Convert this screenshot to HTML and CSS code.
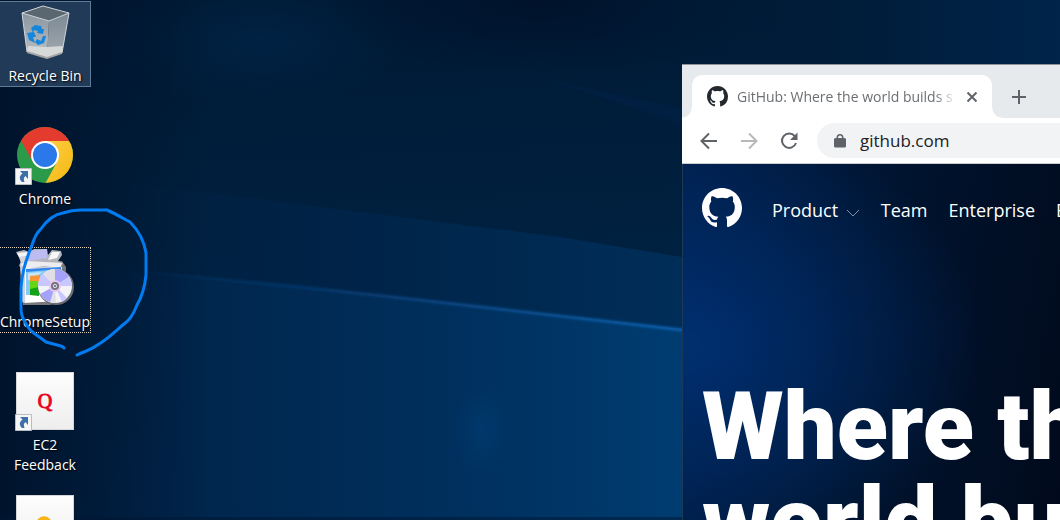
FILE: index.html
```html
<!DOCTYPE html>
<html lang="en">
<head>
<meta charset="utf-8">
<title>Desktop</title>
<link rel="stylesheet" href="styles.css">
</head>
<body>
<main class="desktop">
  <svg class="wallpaper" viewBox="0 0 1060 520" preserveAspectRatio="xMinYMin slice" aria-hidden="true">
    <defs>
      <linearGradient id="base" x1="0" y1="0" x2="0.1" y2="1">
        <stop offset="0" stop-color="#001832"/><stop offset="0.3" stop-color="#001e3b"/><stop offset="1" stop-color="#00254a"/>
      </linearGradient>
      <linearGradient id="lower" gradientUnits="userSpaceOnUse" x1="60" y1="0" x2="690" y2="0">
        <stop offset="0" stop-color="#002148" stop-opacity="0"/><stop offset="0.25" stop-color="#00274e"/><stop offset="0.65" stop-color="#00305e"/><stop offset="1" stop-color="#003d72"/>
      </linearGradient>
      <linearGradient id="middle" gradientUnits="userSpaceOnUse" x1="100" y1="0" x2="690" y2="0">
        <stop offset="0" stop-color="#002244" stop-opacity="0"/><stop offset="0.4" stop-color="#002347"/><stop offset="1" stop-color="#002e59"/>
      </linearGradient>
      <linearGradient id="beam" gradientUnits="userSpaceOnUse" x1="130" y1="0" x2="690" y2="0">
        <stop offset="0" stop-color="#0a4a8c" stop-opacity="0"/><stop offset="0.4" stop-color="#0b4380" stop-opacity="0.7"/><stop offset="1" stop-color="#0864b4"/>
      </linearGradient>
      <linearGradient id="edge" x1="0" y1="0" x2="1" y2="0">
        <stop offset="0" stop-color="#00132c"/><stop offset="1" stop-color="#00132c" stop-opacity="0"/>
      </linearGradient>
      <radialGradient id="glow"><stop offset="0" stop-color="#002549" stop-opacity="0.7"/><stop offset="1" stop-color="#002549" stop-opacity="0"/></radialGradient>
      <radialGradient id="shade"><stop offset="0" stop-color="#00112a" stop-opacity="0.8"/><stop offset="1" stop-color="#00112a" stop-opacity="0"/></radialGradient>
      <radialGradient id="spot"><stop offset="0" stop-color="#00417a" stop-opacity="0.5"/><stop offset="1" stop-color="#00417a" stop-opacity="0"/></radialGradient>
      <linearGradient id="corner" gradientUnits="userSpaceOnUse" x1="600" y1="0" x2="1060" y2="0">
        <stop offset="0" stop-color="#001c38" stop-opacity="0"/><stop offset="0.5" stop-color="#001c38"/><stop offset="1" stop-color="#00244a"/>
      </linearGradient>
      <filter id="thin" filterUnits="userSpaceOnUse" x="0" y="50" width="800" height="350"><feGaussianBlur stdDeviation="1"/></filter>
    </defs>
    <rect width="1060" height="520" fill="url(#base)"/>
    <ellipse cx="260" cy="40" rx="150" ry="70" fill="url(#glow)"/>
    <ellipse cx="540" cy="5" rx="220" ry="70" fill="url(#shade)"/>
    <path d="M540 78 700 112V130Z" fill="#00244a" filter="url(#thin)" opacity="0.5"/>
    <rect x="600" width="460" height="66" fill="url(#corner)"/>
    <path d="M60 174 320 207 560 237 700 260V340L60 262Z" fill="url(#middle)"/>
    <path d="M60 262 160 273 420 300 700 333V520H60Z" fill="url(#lower)"/>
    <ellipse cx="482" cy="430" rx="30" ry="45" fill="url(#spot)"/>
    <path d="M130 270 160 273 310 288 420 300 560 316 700 332" fill="none" stroke="url(#beam)" stroke-width="3" filter="url(#thin)"/>
    <rect width="210" height="520" fill="url(#edge)"/>
    <rect y="517" width="700" height="3" fill="#001632" opacity="0.5"/>
  </svg>

  <nav class="icons" aria-label="Desktop icons">
    <button class="icon icon-selected" type="button">
      <span class="picture">
        <svg viewBox="0 0 58 58" aria-hidden="true">
          <defs>
            <linearGradient id="binL" x1="0" y1="0" x2="0" y2="1"><stop offset="0" stop-color="#8a969f"/><stop offset="1" stop-color="#bcc2c6"/></linearGradient>
            <linearGradient id="binR" x1="0" y1="0" x2="0" y2="1"><stop offset="0" stop-color="#7b8893"/><stop offset="1" stop-color="#a4acb2"/></linearGradient>
          </defs>
          <path d="M6 10 33 18 31 55 11 49Z" fill="url(#binL)"/>
          <path d="M33 18 53 10 46 50 31 55Z" fill="url(#binR)"/>
          <path d="M6 10 27 3 53 10 33 18Z" fill="#5b6770"/>
          <path d="M12 43 31 44 47 43 46 50 31 55 11 49Z" fill="#d7d8d8"/>
          <path d="M11 48 31 54 46 49 46 51 31 56 11 50Z" fill="#a4a5a3"/>
          <path d="M6 10 27 3 53 10 33 18ZL11 49M53 10 46 50" fill="none" stroke="#cfd5d9"/>
          <path d="M15 25 19 22 25 23 26 26 28 26 27 31 21 30 22 28 18 27 17 30ZM11 30 18 29 20 34 17 34 19 40 13 37ZM21 36 25 38 27 33 30 33 28 40 22 42 19 39Z" fill="#1686dc"/>
        </svg>
      </span>
      <span class="label">Recycle Bin</span>
    </button>
    <button class="icon" type="button">
      <span class="picture">
        <svg viewBox="0 0 58 58" aria-hidden="true">
          <defs>
            <clipPath id="disc"><circle cx="29" cy="29" r="28"/></clipPath>
            <linearGradient id="yel" x1="0" y1="0" x2="1" y2="1"><stop offset="0" stop-color="#fdce45"/><stop offset="1" stop-color="#f6b70f"/></linearGradient>
          </defs>
          <g clip-path="url(#disc)">
            <rect width="58" height="58" fill="#2b9a49"/>
            <path d="M29 15H58V58H29L41 36Z" fill="url(#yel)"/>
            <path d="M0 0H58V15H29L17 36 4 13Z" fill="#e33b2e"/>
          </g>
          <circle cx="29" cy="29" r="14" fill="#fff"/>
          <circle cx="29" cy="29" r="12" fill="#2b78ea"/>
        </svg>
        <svg class="badge" viewBox="0 0 17 17" aria-hidden="true"><path d="M.5.5H16.500V16.500H.5Z" fill="#f6f6f7" stroke="#b9bdc2"/><path d="M5 3H13V11L10.500 8C8.500 9.500 8.500 11 9.500 14H7C4 11 4 8 7.500 5.500Z" fill="#3d70a8"/></svg>
      </span>
      <span class="label">Chrome</span>
    </button>
    <button class="icon icon-focused" type="button">
      <span class="picture">
        <svg viewBox="0 0 58 58" aria-hidden="true">
          <path d="M5 14 46 12 50 18 49 50 34 56 7 56Z" fill="#77777c"/>
          <path d="M0 3 8 1 13 3 18 0 31 0 32 6 36 1 45 2 46 6 42 12 47 14 44 20 8 20 3 17 5 12Z" fill="#b4b4bc"/>
          <path d="M13 2 31 0 31 9 12 12Z" fill="#bcbcf0"/>
          <path d="M1 4 12 3 13 7 3 8ZM36 3 44 3 41 9 32 11Z" fill="#f7f7f7"/>
          <path d="M3 8 12 8 10 13 5 14Z" fill="#d6d6da"/>
          <path d="M4 15 12 12 46 14 44 19 28 17 9 20Z" fill="#ededf0"/>
          <path d="M4 16 9 19 9 54 6 53Z" fill="#d2d2d6"/>
          <path d="M9 19 46 18 42 52 9 54Z" fill="#f8f8f8"/>
          <path d="M10 21 45 19 45 48 10 46Z" fill="#86ccfa"/><path d="M10 20 45 18V20L10 23Z" fill="#3487e8"/>
          <path d="M12 24 26 23 18 30 12 31Z" fill="#c3e6fd"/>
          <path d="M10 46H43V52L10 53Z" fill="#fff"/>
          <path d="M14 27 24 26V33H14Z" fill="#fa9637"/><path d="M14 32H22V40H14Z" fill="#65d514"/><path d="M14 40 23 38V47L14 46Z" fill="#13a415"/>
          <circle cx="40" cy="38" r="18" fill="#6c6c72"/>
          <circle cx="39" cy="37" r="17" fill="#f4f4f8"/>
          <path d="M39 37 27 25A17 17 0 0 1 39 20ZM39 37 40 54A17 17 0 0 1 27 49Z" fill="#dfdfe5"/>
          <path d="M39 37 39 20A17 17 0 0 1 53 28ZM39 37 34 53A17 17 0 0 1 24 45Z" fill="#a5a2fb"/>
          <path d="M39 37 53 28A17 17 0 0 1 56 37ZM39 37 22 37A17 17 0 0 1 27 25ZM39 37 51 49A17 17 0 0 1 46 53Z" fill="#c9c7ff"/>
          <circle cx="39" cy="37" r="6" fill="#e8c5ed"/>
          <circle cx="39" cy="37" r="3" fill="#ececf1" stroke="#747584" stroke-width="2"/><circle cx="39" cy="37" r="1" fill="#5c5d70"/>
        </svg>
      </span>
      <span class="label">ChromeSetup</span>
    </button>
    <button class="icon" type="button">
      <span class="picture"><span class="tile">Q</span>
        <svg class="badge" viewBox="0 0 17 17" aria-hidden="true"><path d="M.5.5H16.500V16.500H.5Z" fill="#f6f6f7" stroke="#b9bdc2"/><path d="M5 3H13V11L10.500 8C8.500 9.500 8.500 11 9.500 14H7C4 11 4 8 7.500 5.500Z" fill="#3d70a8"/></svg>
      </span>
      <span class="label">EC2 Feedback</span>
    </button>
    <button class="icon" type="button" aria-label="Shortcut">
      <span class="picture"><span class="tile"><svg viewBox="0 0 58 58" aria-hidden="true"><circle cx="28" cy="29" r="8" fill="#f9b514"/></svg></span></span>
    </button>
  </nav>

  <section class="window" aria-label="Browser">
    <header class="tabstrip">
      <div class="tab">
        <svg class="favicon" viewBox="0 0 16 16" aria-hidden="true"><path id="mark" d="M8 0C3.580 0 0 3.580 0 8c0 3.540 2.290 6.530 5.470 7.590.4.070.55-.17.55-.38 0-.19-.01-.82-.01-1.490-2.010.37-2.530-.49-2.690-.94-.09-.23-.48-.94-.82-1.130-.28-.15-.68-.52-.01-.53.63-.01 1.080.58 1.230.82.72 1.210 1.870.87 2.330.66.070-.52.28-.87.51-1.070-1.780-.2-3.640-.89-3.640-3.950 0-.87.31-1.590.82-2.150-.08-.2-.36-1.020.08-2.120 0 0 .67-.21 2.200.82.64-.18 1.320-.27 2-.27s1.360.09 2 .27c1.530-1.040 2.200-.82 2.200-.82.44 1.100.16 1.920.08 2.120.51.56.82 1.270.82 2.150 0 3.070-1.870 3.750-3.650 3.950.29.25.54.73.54 1.480 0 1.070-.01 1.930-.01 2.200 0 .21.15.46.55.38A8.010 8.010 0 0 0 16 8c0-4.420-3.580-8-8-8Z"/></svg>
        <span class="tab-title">GitHub: Where the world builds s</span>
        <button class="plain close" type="button" aria-label="Close tab"><svg viewBox="0 0 12 12"><path d="M1.500 1.500 10.500 10.500M10.500 1.500 1.500 10.500"/></svg></button>
      </div>
      <button class="plain new-tab" type="button" aria-label="New tab"><svg viewBox="0 0 16 16"><path d="M8 1V15M1 8H15"/></svg></button>
    </header>
    <div class="toolbar">
      <button class="plain" type="button" aria-label="Back"><svg viewBox="0 0 18 18"><path d="M17 9H2M9 1.500 1.500 9 9 16.500"/></svg></button>
      <button class="plain" type="button" aria-label="Forward" disabled><svg viewBox="0 0 18 18"><path d="M1 9H16M9 1.500 16.500 9 9 16.500"/></svg></button>
      <button class="plain" type="button" aria-label="Reload"><svg viewBox="0 0 18 18"><path d="M14.800 4.200A7.200 7.200 0 1 0 16 11"/><path class="solid" d="M17.500.5V8H10Z"/></svg></button>
      <label class="address">
        <svg viewBox="0 0 12 16" aria-hidden="true"><path d="M1.500 5H2.500V4.500A3.500 3.500 0 0 1 9.500 4.500V5H10.500A1.500 1.500 0 0 1 12 6.500V13A1.500 1.500 0 0 1 10.500 14.500H1.500A1.500 1.500 0 0 1 0 13V6.500A1.500 1.500 0 0 1 1.500 5ZM4 5H8V4.500A2 2 0 0 0 4 4.500Z" fill="#5f6368" fill-rule="evenodd"/></svg>
        <input type="text" value="github.com" aria-label="Address">
      </label>
    </div>
    <article class="page">
      <nav class="site-nav" aria-label="Site">
        <a class="logo" href="#" aria-label="Home"><svg viewBox="0 0 16 16"><use href="#mark"/></svg></a>
        <a href="#">Product <svg class="chevron" viewBox="0 0 14 8" aria-hidden="true"><path d="M1 1 7 7 13 1"/></svg></a>
        <a href="#">Team</a>
        <a href="#">Enterprise</a>
        <a href="#">Explore</a>
      </nav>
      <h1 class="headline">Where the<br>world builds</h1>
    </article>
  </section>

  <svg class="ink" viewBox="0 0 160 160" aria-hidden="true"><path d="M64 143C62 140 59 141 46 137C42 134 38 131 35 129Q28 124 25 117Q21 111 21 103V83C22 69 24 60 32 40C34 34 36 28 40 25C47 15 55 9 63 8Q72 5 80 5H107C114 8 119 11 130 17C138 25 144 35 146 48V70C145 81 141 93 137 100C134 108 130 115 124 119C118 124 108 134 99 139C91 145 88 145 77 150"/></svg>
</main>
</body>
</html>
```
FILE: styles.css
```css
* { box-sizing: border-box; }

body {
  margin: 0;
  font-family: "Open Sans", "Noto Sans", sans-serif;
}

.desktop {
  position: relative;
  height: 100vh;
  overflow: hidden;
  background: #001c39;
}

.wallpaper {
  position: absolute;
  width: 100%;
  height: 100%;
}

/* Desktop shortcuts */
.icons {
  position: relative;
  display: grid;
  grid-template-columns: 91px;
  grid-auto-rows: 123px;
  align-items: start;
  padding-top: 1px;
}

.icon {
  display: flex;
  flex-direction: column;
  align-items: center;
  gap: 5px;
  padding: 1px 0 0;
  border: 1px solid transparent;
  border-left: 0;
  background: none;
  color: #fff;
  font: 14px/20px "Open Sans", "Noto Sans", sans-serif;
  text-shadow: 1px 1px 2px #000;
}

.icon-selected {
  border-color: #5d7a97;
  background: #213a57;
}

.icon-focused { border: 1px dotted #e6d3b4; border-left: 0; }

.picture {
  position: relative;
  width: 58px;
  height: 58px;
}

.picture svg { display: block; width: 100%; }

.picture .badge {
  position: absolute;
  left: -1px;
  bottom: -1px;
  width: 17px;
}

.tile {
  display: block;
  height: 58px;
  border: 1px solid #d5d7da;
  background: linear-gradient(#fdfdfd, #eeeeef);
  color: #e8061f;
  font: 20px/56px "Liberation Serif", serif;
  -webkit-text-stroke: 1px #e8061f;
  text-shadow: none;
}

/* Browser window */
.window {
  position: absolute;
  inset: 64px 0 0 682px;
  display: flex;
  flex-direction: column;
  border-top: 1px solid #8f949a;
  overflow: hidden;
  background: #fff;
}

.tabstrip {
  display: flex;
  align-items: flex-end;
  padding: 10px 0 0 10px;
  background: #e7eaed;
}

.tab {
  position: relative;
  flex: none;
  display: flex;
  align-items: center;
  gap: 9px;
  width: 300px;
  height: 43px;
  padding: 0 14px 0 15px;
  border-radius: 10px 10px 0 0;
  background: #fff;
}

/* Flared feet of the active tab */
.tab::before,
.tab::after {
  content: "";
  position: absolute;
  bottom: 0;
  width: 10px;
  height: 10px;
}

.tab::before {
  right: 100%;
  background: radial-gradient(circle at 0 0, transparent 9px, #fff 10px);
}

.tab::after {
  left: 100%;
  background: radial-gradient(circle at 100% 0, transparent 9px, #fff 10px);
}

.favicon { flex: none; width: 21px; fill: #24292f; }

.tab-title {
  flex: 1;
  overflow: hidden;
  color: #6c6f73;
  font-size: 14px;
  white-space: nowrap;
  mask-image: linear-gradient(to right, #000 90%, transparent);
}

.plain {
  display: grid;
  place-items: center;
  padding: 0;
  border: 0;
  background: none;
}

.plain svg {
  width: 18px;
  fill: none;
  stroke: #5f6368;
  stroke-width: 2;
}

.plain:disabled { opacity: 0.45; }
.plain .solid { fill: #5f6368; stroke: none; }
.close svg { width: 12px; }

.new-tab {
  width: 54px;
  height: 43px;
}

.new-tab svg { width: 16px; }

.toolbar {
  display: flex;
  align-items: center;
  gap: 22px;
  height: 46px;
  padding-left: 18px;
  border-bottom: 1px solid #c9cdd2;
}

.address {
  flex: 1;
  display: flex;
  align-items: center;
  gap: 14px;
  height: 35px;
  margin-left: -3px;
  padding-left: 17px;
  border-radius: 18px 0 0 18px;
  background: #f1f3f4;
}

.address svg { width: 12px; }

.address input {
  flex: 1;
  min-width: 0;
  padding: 0;
  border: 0;
  outline: 0;
  background: none;
  color: #202124;
  font: 17px/24px "Open Sans", "Noto Sans", sans-serif;
}

.page {
  flex: 1;
  padding: 24px 0 0 19px;
  border-left: 1px solid #1c3957;
  overflow: hidden;
  background:
    radial-gradient(ellipse 300px 230px at 0 180px, #002f70, transparent),
    linear-gradient(100deg, #001f4b, #00142f 50%, #010a1c);
  color: #fff;
}

.site-nav {
  display: flex;
  align-items: center;
  gap: 21px;
  white-space: nowrap;
}

.site-nav a {
  flex: none;
  padding-top: 3px;
  color: #fff;
  font-size: 18px;
  line-height: 24px;
  text-decoration: none;
}

.site-nav .logo {
  width: 40px;
  height: 40px;
  margin-right: 9px;
  padding: 0;
}

.logo svg { display: block; fill: #fff; }

.chevron {
  width: 14px;
  margin-left: 3px;
  fill: none;
  stroke: #8290a8;
}

.headline {
  margin: 152px 0 0;
  font: 900 94px/95px Roboto, "Liberation Sans", sans-serif;
  white-space: nowrap;
}

/* Freehand highlight round the setup icon */
.ink {
  position: absolute;
  left: 0;
  top: 205px;
  width: 160px;
  fill: none;
  stroke: #007bf0;
  stroke-width: 3;
  stroke-linecap: round;
  stroke-linejoin: round;
  pointer-events: none;
}
```
